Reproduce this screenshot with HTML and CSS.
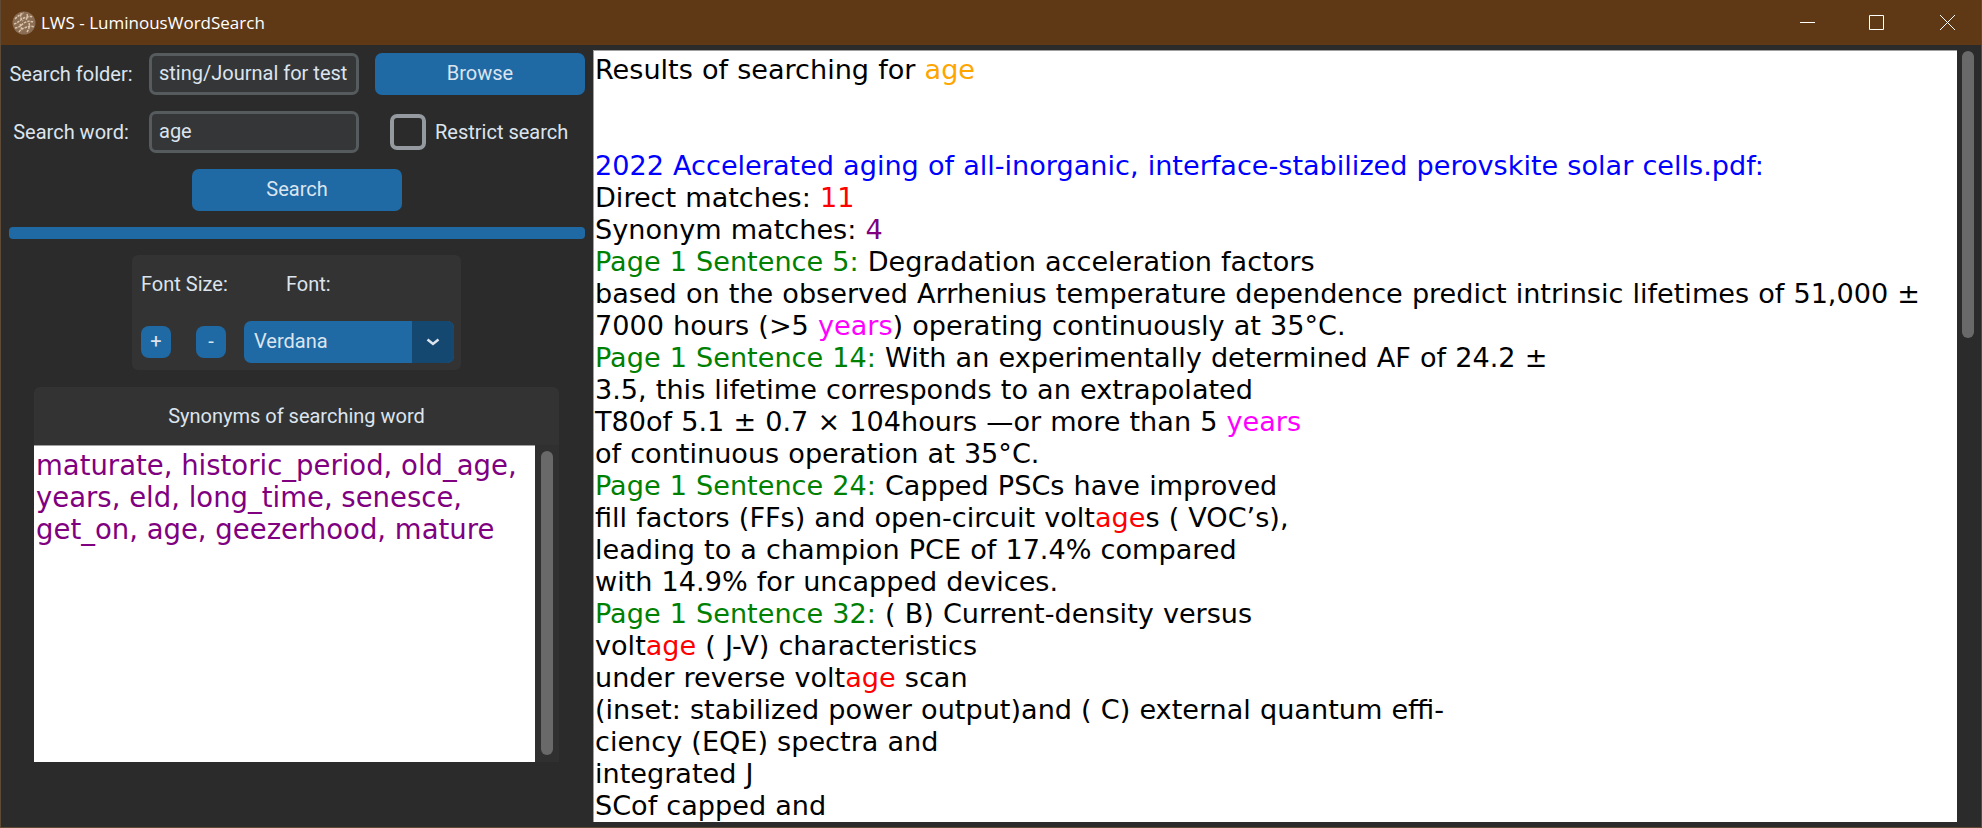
FILE: index.html
```html
<!DOCTYPE html>
<html lang="en">
<head>
  <meta charset="UTF-8">
  <title>LWS - LuminousWordSearch</title>
  <link rel="stylesheet" href="styles.css">
</head>
<body>

<div class="window">
  <div class="titlebar">
    <svg class="logo" width="24" height="24" viewBox="0 0 24 24">
      <circle cx="12" cy="12" r="11.5" fill="#8a6d52"/>
      <path d="M3 8c3-3 5-5 9-6M2 13c4-1 6-4 10-6 3-1 6-2 9-1M3 17c4 0 6-3 9-5s6-2 10-1M7 21c2-3 5-4 8-5 2-1 5-1 7 0M9 3c-1 3 0 5 2 7M15 3c1 2 0 4-1 6M17 12c1 3 0 6-2 9M8 13c1 2 2 4 1 7" fill="none" stroke="#d8c3ab" stroke-width="1.5" stroke-dasharray="2.500 1"/>
    </svg>
    <span class="app-title">LWS - LuminousWordSearch</span>
    <div class="win-buttons">
      <svg width="15" height="15" viewBox="0 0 15 15"><path d="M0 7.500h15" stroke="#fff" fill="none"/></svg>
      <svg width="15" height="15" viewBox="0 0 15 15"><path d="M.5.5h14v14h-14z" stroke="#fff" fill="none"/></svg>
      <svg class="win-close" width="15" height="15" viewBox="0 0 15 15"><path d="M0 0l15 15M15 0L0 15" stroke="#fff" fill="none"/></svg>
    </div>
  </div>

  <div class="content">
    <div class="sidebar">
      <div class="search-grid">
        <label class="field-label">Search folder:</label>
        <input class="entry" type="text" value="sting/Journal for test">
        <button class="btn">Browse</button>

        <label class="field-label">Search word:</label>
        <input class="entry" type="text" value="age">
        <div class="restrict">
          <span class="checkbox"></span>
          <span>Restrict search</span>
        </div>
      </div>

      <button class="btn search-btn">Search</button>
      <div class="progress"></div>

      <div class="font-frame">
        <div class="font-labels">
          <span class="font-size-label">Font Size:</span>
          <span>Font:</span>
        </div>
        <div class="font-controls">
          <button class="btn small-btn">+</button>
          <button class="btn small-btn minus">-</button>
          <div class="combo">
            <span class="combo-value">Verdana</span>
            <span class="combo-arrow">
              <svg width="14" height="8" viewBox="0 0 14 8"><path d="M1.5 1.5L7 6l5.500-4.500" stroke="#dce4ee" stroke-width="2.500" fill="none"/></svg>
            </span>
          </div>
        </div>
      </div>

      <div class="syn-frame">
        <div class="syn-title">Synonyms of searching word</div>
        <div class="syn-body">
          <div class="syn-text">maturate, historic_period, old_age, years, eld, long_time, senesce, get_on, age, geezerhood, mature</div>
          <div class="syn-scroll"><div class="thumb"></div></div>
        </div>
      </div>
    </div>

    <div class="results">
      <div>Results of searching for <span class="orange">age</span></div>
      <div>&nbsp;</div>
      <div>&nbsp;</div>
      <div class="blue">2022 Accelerated aging of all-inorganic, interface-stabilized perovskite solar cells.pdf:</div>
      <div>Direct matches: <span class="red">11</span></div>
      <div>Synonym matches: <span class="purple">4</span></div>
      <div><span class="green">Page 1 Sentence 5:</span> Degradation acceleration factors</div>
      <div>based on the observed Arrhenius temperature dependence predict intrinsic lifetimes of 51,000 ±</div>
      <div>7000 hours (&gt;5 <span class="magenta">years</span>) operating continuously at 35°C.</div>
      <div><span class="green">Page 1 Sentence 14:</span> With an experimentally determined AF of 24.2 ±</div>
      <div>3.5, this lifetime corresponds to an extrapolated</div>
      <div>T80of 5.1 ± 0.7 × 104hours —or more than 5 <span class="magenta">years</span></div>
      <div>of continuous operation at 35°C.</div>
      <div><span class="green">Page 1 Sentence 24:</span> Capped PSCs have improved</div>
      <div>fill factors (FFs) and open-circuit volt<span class="red">age</span>s ( VOC’s),</div>
      <div>leading to a champion PCE of 17.4% compared</div>
      <div>with 14.9% for uncapped devices.</div>
      <div><span class="green">Page 1 Sentence 32:</span> ( B) Current-density versus</div>
      <div>volt<span class="red">age</span> ( J-V) characteristics</div>
      <div>under reverse volt<span class="red">age</span> scan</div>
      <div>(inset: stabilized power output)and ( C) external quantum effi-</div>
      <div>ciency (EQE) spectra and</div>
      <div>integrated J</div>
      <div>SCof capped and</div>
    </div>

    <div class="main-scroll"><div class="thumb"></div></div>
  </div>
</div>

</body>
</html>
```

FILE: styles.css
```css
* {
  box-sizing: border-box;
}

html, body {
  margin: 0;
  height: 100%;
}

body {
  font-family: Roboto, sans-serif;
  font-size: 20px;
  color: #dce4ee;
  background: #2b2b2b;
  overflow: hidden;
}

.window {
  height: 828px;
  display: flex;
  flex-direction: column;
  border: 1px solid #5f4a36;
  border-top: none;
}

.titlebar {
  height: 45px;
  flex: none;
  display: flex;
  align-items: center;
  background: #5f3915;
  color: #fff;
  padding-left: 11px;
}

.logo {
  margin-right: 5px;
}

.app-title {
  font-family: "Open Sans", sans-serif;
  font-size: 17px;
}

.win-buttons {
  margin-left: auto;
  display: flex;
  gap: 54px;
  padding-right: 26px;
}

.win-close {
  margin-left: 2px;
}

.content {
  flex: 1;
  display: flex;
  min-height: 0;
}

.sidebar {
  width: 592px;
  flex: none;
  padding: 8px 7px 0 8px;
  display: flex;
  flex-direction: column;
}

.search-grid {
  display: grid;
  grid-template-columns: 124px 210px 210px;
  column-gap: 16px;
  row-gap: 16px;
  grid-auto-rows: 42px;
  align-items: center;
}

.search-grid .btn {
  grid-column: 3;
}

.field-label {
  justify-self: center;
  white-space: nowrap;
}

.entry {
  height: 42px;
  width: 210px;
  background: #343638;
  border: 3px solid #565b5e;
  border-radius: 7px;
  color: #dce4ee;
  font: 20px Roboto, sans-serif;
  padding: 0 7px 2px;
}

.btn {
  height: 42px;
  width: 210px;
  border: none;
  border-radius: 7px;
  background: #1f6aa5;
  color: #dce4ee;
  font: 20px Roboto, sans-serif;
  padding: 0 0 2px;
}

.restrict {
  display: flex;
  align-items: center;
  gap: 9px;
  padding-left: 15px;
  white-space: nowrap;
}

.checkbox {
  width: 36px;
  height: 36px;
  border: 4px solid #949a9f;
  border-radius: 7px;
}

.search-btn {
  margin: 16px 0 0 183px;
}

.progress {
  height: 12px;
  width: 576px;
  margin-top: 16px;
  background: #1f6aa5;
  border-radius: 4px;
}

.font-frame {
  width: 329px;
  height: 115px;
  margin: 16px 0 0 123px;
  padding: 0 7px 0 9px;
  background: #333333;
  border-radius: 6px;
}

.font-labels {
  height: 66px;
  display: flex;
  align-items: flex-start;
  padding-top: 17px;
}

.font-size-label {
  width: 145px;
}

.font-controls {
  display: flex;
  align-items: center;
}

.small-btn {
  width: 30px;
  height: 32px;
  border-radius: 8px;
}

.minus {
  margin-left: 25px;
  margin-right: 18px;
}

.combo {
  width: 210px;
  height: 42px;
  display: flex;
  background: #1f6aa5;
  border-radius: 7px;
  overflow: hidden;
}

.combo-value {
  flex: 1;
  padding-left: 10px;
  line-height: 41px;
}

.combo-arrow {
  width: 42px;
  background: #144870;
  display: flex;
  align-items: center;
  justify-content: center;
}

.syn-frame {
  width: 525px;
  height: 375px;
  margin: 17px 0 0 25px;
  background: #333333;
  border-radius: 6px 6px 0 0;
}

.syn-title {
  height: 58px;
  line-height: 58px;
  text-align: center;
}

.syn-body {
  height: 317px;
  display: flex;
}

.syn-text {
  width: 501px;
  background: #fff;
  border-top: 1px solid #a0a0a0;
  color: #800080;
  font-family: "DejaVu Sans", sans-serif;
  font-size: 27.5px;
  line-height: 32px;
  padding: 3px 2px;
}

.syn-scroll {
  flex: 1;
  background: #303030;
  padding: 6px 6px 7px 6px;
}

.thumb {
  height: 100%;
  background: #696969;
  border-radius: 6px;
}

.results {
  width: 1364px;
  height: 772px;
  margin-top: 5px;
  overflow: hidden;
  background: #fff;
  border-top: 1px solid #a0a0a0;
  border-left: 1px solid #a0a0a0;
  color: #000;
  font-family: "DejaVu Sans", sans-serif;
  font-size: 27.1px;
  word-spacing: 0.5px;
  line-height: 32px;
  padding: 3px 1px;
  white-space: nowrap;
}

.main-scroll {
  width: 12px;
  height: 287px;
  margin: 6px 0 0 5px;
}

.blue { color: #0000ff; }
.red { color: #ff0000; }
.green { color: #008000; }
.purple { color: #800080; }
.magenta { color: #ff00ff; }
.orange { color: #ffa500; }
```
